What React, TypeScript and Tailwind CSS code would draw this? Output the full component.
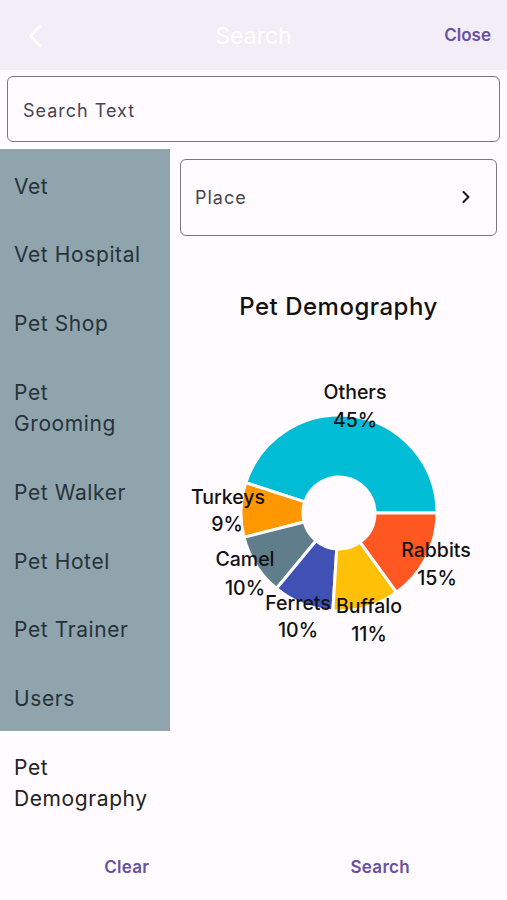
import { ChevronLeft, ChevronRight } from 'lucide-react'

const font = { fontFamily: 'Inter, "Noto Sans", sans-serif' }

type Slice = { label: string; pct: number; color: string }

const slices: Slice[] = [
  { label: 'Others', pct: 45, color: '#00bcd4' },
  { label: 'Turkeys', pct: 9, color: '#ff9800' },
  { label: 'Camel', pct: 10, color: '#607d8b' },
  { label: 'Ferrets', pct: 10, color: '#3f51b5' },
  { label: 'Buffalo', pct: 11, color: '#ffc107' },
  { label: 'Rabbits', pct: 15, color: '#ff5722' },
]

// label centres, in chart coordinates
const labelPos: Record<string, [number, number, number, number]> = {
  Others: [185, 22, 185, 50],
  Turkeys: [58, 127, 57, 154],
  Camel: [75, 189, 75, 218],
  Ferrets: [128, 233, 128, 260],
  Buffalo: [199, 236, 199, 264],
  Rabbits: [266, 180, 267, 208],
}

const menu = [
  'Vet',
  'Vet Hospital',
  'Pet Shop',
  'Pet\nGrooming',
  'Pet Walker',
  'Pet Hotel',
  'Pet Trainer',
  'Users',
]

function point(cx: number, cy: number, r: number, deg: number) {
  const a = (deg * Math.PI) / 180
  return [cx + r * Math.cos(a), cy - r * Math.sin(a)]
}

function arcPath(cx: number, cy: number, r0: number, r1: number, a0: number, a1: number) {
  const [x1, y1] = point(cx, cy, r1, a0)
  const [x2, y2] = point(cx, cy, r1, a1)
  const [x3, y3] = point(cx, cy, r0, a1)
  const [x4, y4] = point(cx, cy, r0, a0)
  const large = a1 - a0 > 180 ? 1 : 0
  return `M${x1} ${y1} A${r1} ${r1} 0 ${large} 0 ${x2} ${y2} L${x3} ${y3} A${r0} ${r0} 0 ${large} 1 ${x4} ${y4} Z`
}

function DonutChart() {
  const cx = 169
  const cy = 143
  let start = 0
  return (
    <svg width={337} height={280} viewBox="0 0 337 280" className="block">
      {slices.map((s) => {
        const a0 = start
        const a1 = start + s.pct * 3.6
        start = a1
        return (
          <path
            key={s.label}
            d={arcPath(cx, cy, 36, 98, a0, a1)}
            fill={s.color}
            stroke="#fffbfe"
            strokeWidth={3}
            strokeLinejoin="round"
          />
        )
      })}
      {slices.map((s) => {
        const [lx, ly, px, py] = labelPos[s.label]
        return (
          <g
            key={s.label}
            fill="#111"
            fontSize={19.5}
            fontWeight={500}
            textAnchor="middle"
            dominantBaseline="central"
            style={font}
          >
            <text x={lx} y={ly}>
              {s.label}
            </text>
            <text x={px} y={py}>
              {s.pct}%
            </text>
          </g>
        )
      })}
    </svg>
  )
}

function MenuItem({ label, active }: { label: string; active?: boolean }) {
  const twoLine = label.includes('\n')
  return (
    <div
      className={`flex items-center whitespace-pre-line pl-[14px] pt-[3px] text-[21px] leading-[31px] tracking-[0.6px] ${
        twoLine ? 'h-[101px]' : 'h-[68.5px]'
      } ${active ? 'text-[#222]' : 'text-[#263238]'}`}
    >
      {label}
    </div>
  )
}

export default function App() {
  return (
    <div className="flex h-[900px] w-[507px] flex-col bg-[#fffbfe]" style={font}>
      <header className="relative flex h-[70px] items-center justify-center bg-[#f3edf7] pt-[3px]">
        <ChevronLeft className="absolute left-[16px] top-[17px] h-[38px] w-[38px] text-white" strokeWidth={1.6} />
        <h1 className="text-[23px] text-white">Search</h1>
        <button type="button" className="absolute right-[16px] top-[23px] text-[17px] font-semibold text-[#6750a4]">
          Close
        </button>
      </header>

      <div className="mx-[7px] mt-[6px] flex h-[66px] items-center rounded-[6px] border-[1.5px] border-[#7a7a7a] px-[15px] pt-[3px] text-[18px] tracking-[1px] text-[#49454f]">
        Search Text
      </div>

      <div className="mt-[7px] flex flex-1">
        <div className="w-[170px] shrink-0">
          <div className="bg-[#90a4ae] pt-[2px]">
            {menu.map((m) => (
              <MenuItem key={m} label={m} />
            ))}
          </div>
          <MenuItem label={'Pet\nDemography'} active />
        </div>

        <div className="flex w-[337px] flex-col items-center pt-[10px]">
          <div className="mx-[10px] flex h-[77px] w-[317px] items-center justify-between rounded-[6px] border-[1.5px] border-[#7a7a7a] pl-[14px] pr-[20px]">
            <span className="text-[18px] tracking-[1px] text-[#49454f]">Place</span>
            <ChevronRight className="h-[20px] w-[20px] text-[#1c1b1f]" strokeWidth={2.5} />
          </div>
          <h2 className="mt-[53px] text-[24px] font-medium tracking-[0.5px] text-[#111]">Pet Demography</h2>
          <div className="mt-[45px]">
            <DonutChart />
          </div>
        </div>
      </div>

      <div className="flex h-[68px] items-center pt-[3px]">
        <button type="button" className="flex-1 text-[17px] font-semibold tracking-[0.3px] text-[#6750a4]">
          Clear
        </button>
        <button type="button" className="flex-1 text-[17px] font-semibold tracking-[0.3px] text-[#6750a4]">
          Search
        </button>
      </div>
    </div>
  )
}
